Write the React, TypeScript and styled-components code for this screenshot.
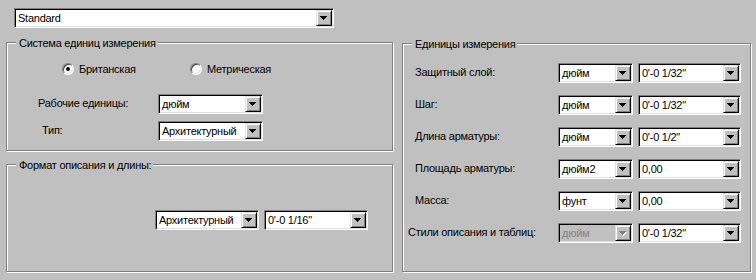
import React from 'react';
import styled, { createGlobalStyle } from 'styled-components';

const GlobalStyle = createGlobalStyle`
  html, body {
    margin: 0;
    padding: 0;
    background: #c0c0c0;
  }
  body {
    font-family: "Liberation Sans", Arial, sans-serif;
    font-size: 11px;
    letter-spacing: -0.25px;
    color: #000;
  }
`;

const Window = styled.div`
  width: 756px;
  height: 280px;
  box-sizing: border-box;
  padding-top: 8px;
  background: #c0c0c0;
  overflow: hidden;
`;

const TopBar = styled.div`
  padding-left: 14px;
`;

const Columns = styled.div`
  display: flex;
  gap: 9px;
  margin-top: 14px;
  padding-left: 6px;
`;

const LeftColumn = styled.div`
  display: flex;
  flex-direction: column;
  gap: 13px;
`;

const Group = styled.div<{ $w: number; $h: number; $top?: number }>`
  position: relative;
  box-sizing: border-box;
  width: ${(p) => p.$w}px;
  height: ${(p) => p.$h}px;
  margin-top: ${(p) => p.$top || 0}px;
  border: 1px solid #808080;
  box-shadow: inset 1px 1px 0 #fff, 1px 1px 0 #fff;
`;

const Legend = styled.span`
  position: absolute;
  top: -6px;
  left: 9px;
  padding: 0 2px 0 3px;
  background: #c0c0c0;
  line-height: 13px;
  white-space: nowrap;
`;

const SystemBody = styled.div`
  padding-top: 20px;
  display: flex;
  flex-direction: column;
`;

const RadioRow = styled.div`
  display: grid;
  grid-template-columns: 128px auto;
  margin-left: 55px;
  height: 12px;
  align-items: center;
`;

const RadioItem = styled.label`
  display: flex;
  align-items: center;
  gap: 5px;
  white-space: nowrap;
`;

const RadioMark = styled.span<{ $checked?: boolean }>`
  position: relative;
  box-sizing: border-box;
  width: 12px;
  height: 12px;
  flex: none;
  border-radius: 50%;
  background: #fff;
  border: 1px solid;
  border-color: #808080 #fff #fff #808080;
  box-shadow: inset 1px 1px 0 #404040, inset -1px -1px 0 #dfdfdf;

  &::after {
    content: '';
    display: ${(p) => (p.$checked ? 'block' : 'none')};
    position: absolute;
    left: 3px;
    top: 3px;
    width: 4px;
    height: 4px;
    border-radius: 50%;
    background: #000;
  }
`;

const FieldRow = styled.div<{ $top: number }>`
  display: grid;
  grid-template-columns: 146px 105px;
  column-gap: 5px;
  align-items: center;
  margin-top: ${(p) => p.$top}px;
`;

const FieldLabel = styled.span<{ $indent: number }>`
  padding-left: ${(p) => p.$indent}px;
  padding-bottom: 3px;
  white-space: nowrap;
`;

const FormatBody = styled.div`
  display: flex;
  gap: 5px;
  padding: 45px 0 0 148px;
`;

const UnitsGrid = styled.div`
  display: grid;
  grid-template-columns: 150px 75px 103px;
  column-gap: 5px;
  row-gap: 12px;
  align-items: center;
  padding-top: 19px;
`;

const ComboBox = styled.div<{ $w: number; $disabled?: boolean }>`
  box-sizing: border-box;
  width: ${(p) => p.$w}px;
  height: 20px;
  display: flex;
  align-items: stretch;
  border: 1px solid;
  border-color: #808080 #fff #fff #808080;
  box-shadow: inset 1px 1px 0 #000, inset -1px -1px 0 #dfdfdf;
  padding: 1px;
  background: ${(p) => (p.$disabled ? '#c0c0c0' : '#fff')};
`;

const ComboText = styled.span<{ $disabled?: boolean }>`
  flex: 1;
  padding-left: 2px;
  line-height: 16px;
  white-space: nowrap;
  overflow: hidden;
  color: ${(p) => (p.$disabled ? '#808080' : '#000')};
`;

const ComboButton = styled.span`
  box-sizing: border-box;
  width: 16px;
  height: 16px;
  flex: none;
  display: flex;
  align-items: center;
  justify-content: center;
  background: #c0c0c0;
  border: 1px solid;
  border-color: #dfdfdf #000 #000 #dfdfdf;
  box-shadow: inset 1px 1px 0 #fff, inset -1px -1px 0 #808080;
`;

const Arrow = ({ disabled }: { disabled?: boolean }) => (
  <svg width="8" height="5" viewBox="0 0 8 5" shapeRendering="crispEdges">
    {disabled && <path d="M1 1h7v1H1zM2 2h5v1H2zM3 3h3v1H3zM4 4h1v1H4z" fill="#fff" />}
    <path d="M0 0h7v1H0zM1 1h5v1H1zM2 2h3v1H2zM3 3h1v1H3z" fill={disabled ? '#808080' : '#000'} />
  </svg>
);

const Combo = ({ w, value, disabled }: { w: number; value: string; disabled?: boolean }) => (
  <ComboBox $w={w} $disabled={disabled}>
    <ComboText $disabled={disabled}>{value}</ComboText>
    <ComboButton>
      <Arrow disabled={disabled} />
    </ComboButton>
  </ComboBox>
);

const units = [
  { label: 'Защитный слой:', unit: 'дюйм', value: "0'-0 1/32\"", indent: 12 },
  { label: 'Шаг:', unit: 'дюйм', value: "0'-0 1/32\"", indent: 12 },
  { label: 'Длина арматуры:', unit: 'дюйм', value: "0'-0 1/2\"", indent: 12 },
  { label: 'Площадь арматуры:', unit: 'дюйм2', value: '0,00', indent: 12 },
  { label: 'Масса:', unit: 'фунт', value: '0,00', indent: 12 },
  { label: 'Стили описания и таблиц:', unit: 'дюйм', value: "0'-0 1/32\"", indent: 5, disabled: true },
];

const App: React.FC = () => (
  <Window>
    <GlobalStyle />
    <TopBar>
      <Combo w={320} value="Standard" />
    </TopBar>
    <Columns>
      <LeftColumn>
        <Group $w={387} $h={109}>
          <Legend>Система единиц измерения</Legend>
          <SystemBody>
            <RadioRow>
              <RadioItem>
                <RadioMark $checked />
                Британская
              </RadioItem>
              <RadioItem>
                <RadioMark />
                Метрическая
              </RadioItem>
            </RadioRow>
            <FieldRow $top={19}>
              <FieldLabel $indent={31}>Рабочие единицы:</FieldLabel>
              <Combo w={105} value="дюйм" />
            </FieldRow>
            <FieldRow $top={7}>
              <FieldLabel $indent={35}>Тип:</FieldLabel>
              <Combo w={105} value="Архитектурный" />
            </FieldRow>
          </SystemBody>
        </Group>
        <Group $w={387} $h={108}>
          <Legend>Формат описания и длины:</Legend>
          <FormatBody>
            <Combo w={104} value="Архитектурный" />
            <Combo w={104} value={"0'-0 1/16\""} />
          </FormatBody>
        </Group>
      </LeftColumn>
      <Group $w={349} $h={229} $top={1}>
        <Legend>Единицы измерения</Legend>
        <UnitsGrid>
          {units.map((u) => (
            <React.Fragment key={u.label}>
              <FieldLabel $indent={u.indent}>{u.label}</FieldLabel>
              <Combo w={75} value={u.unit} disabled={u.disabled} />
              <Combo w={103} value={u.value} />
            </React.Fragment>
          ))}
        </UnitsGrid>
      </Group>
    </Columns>
  </Window>
);

export default App;
